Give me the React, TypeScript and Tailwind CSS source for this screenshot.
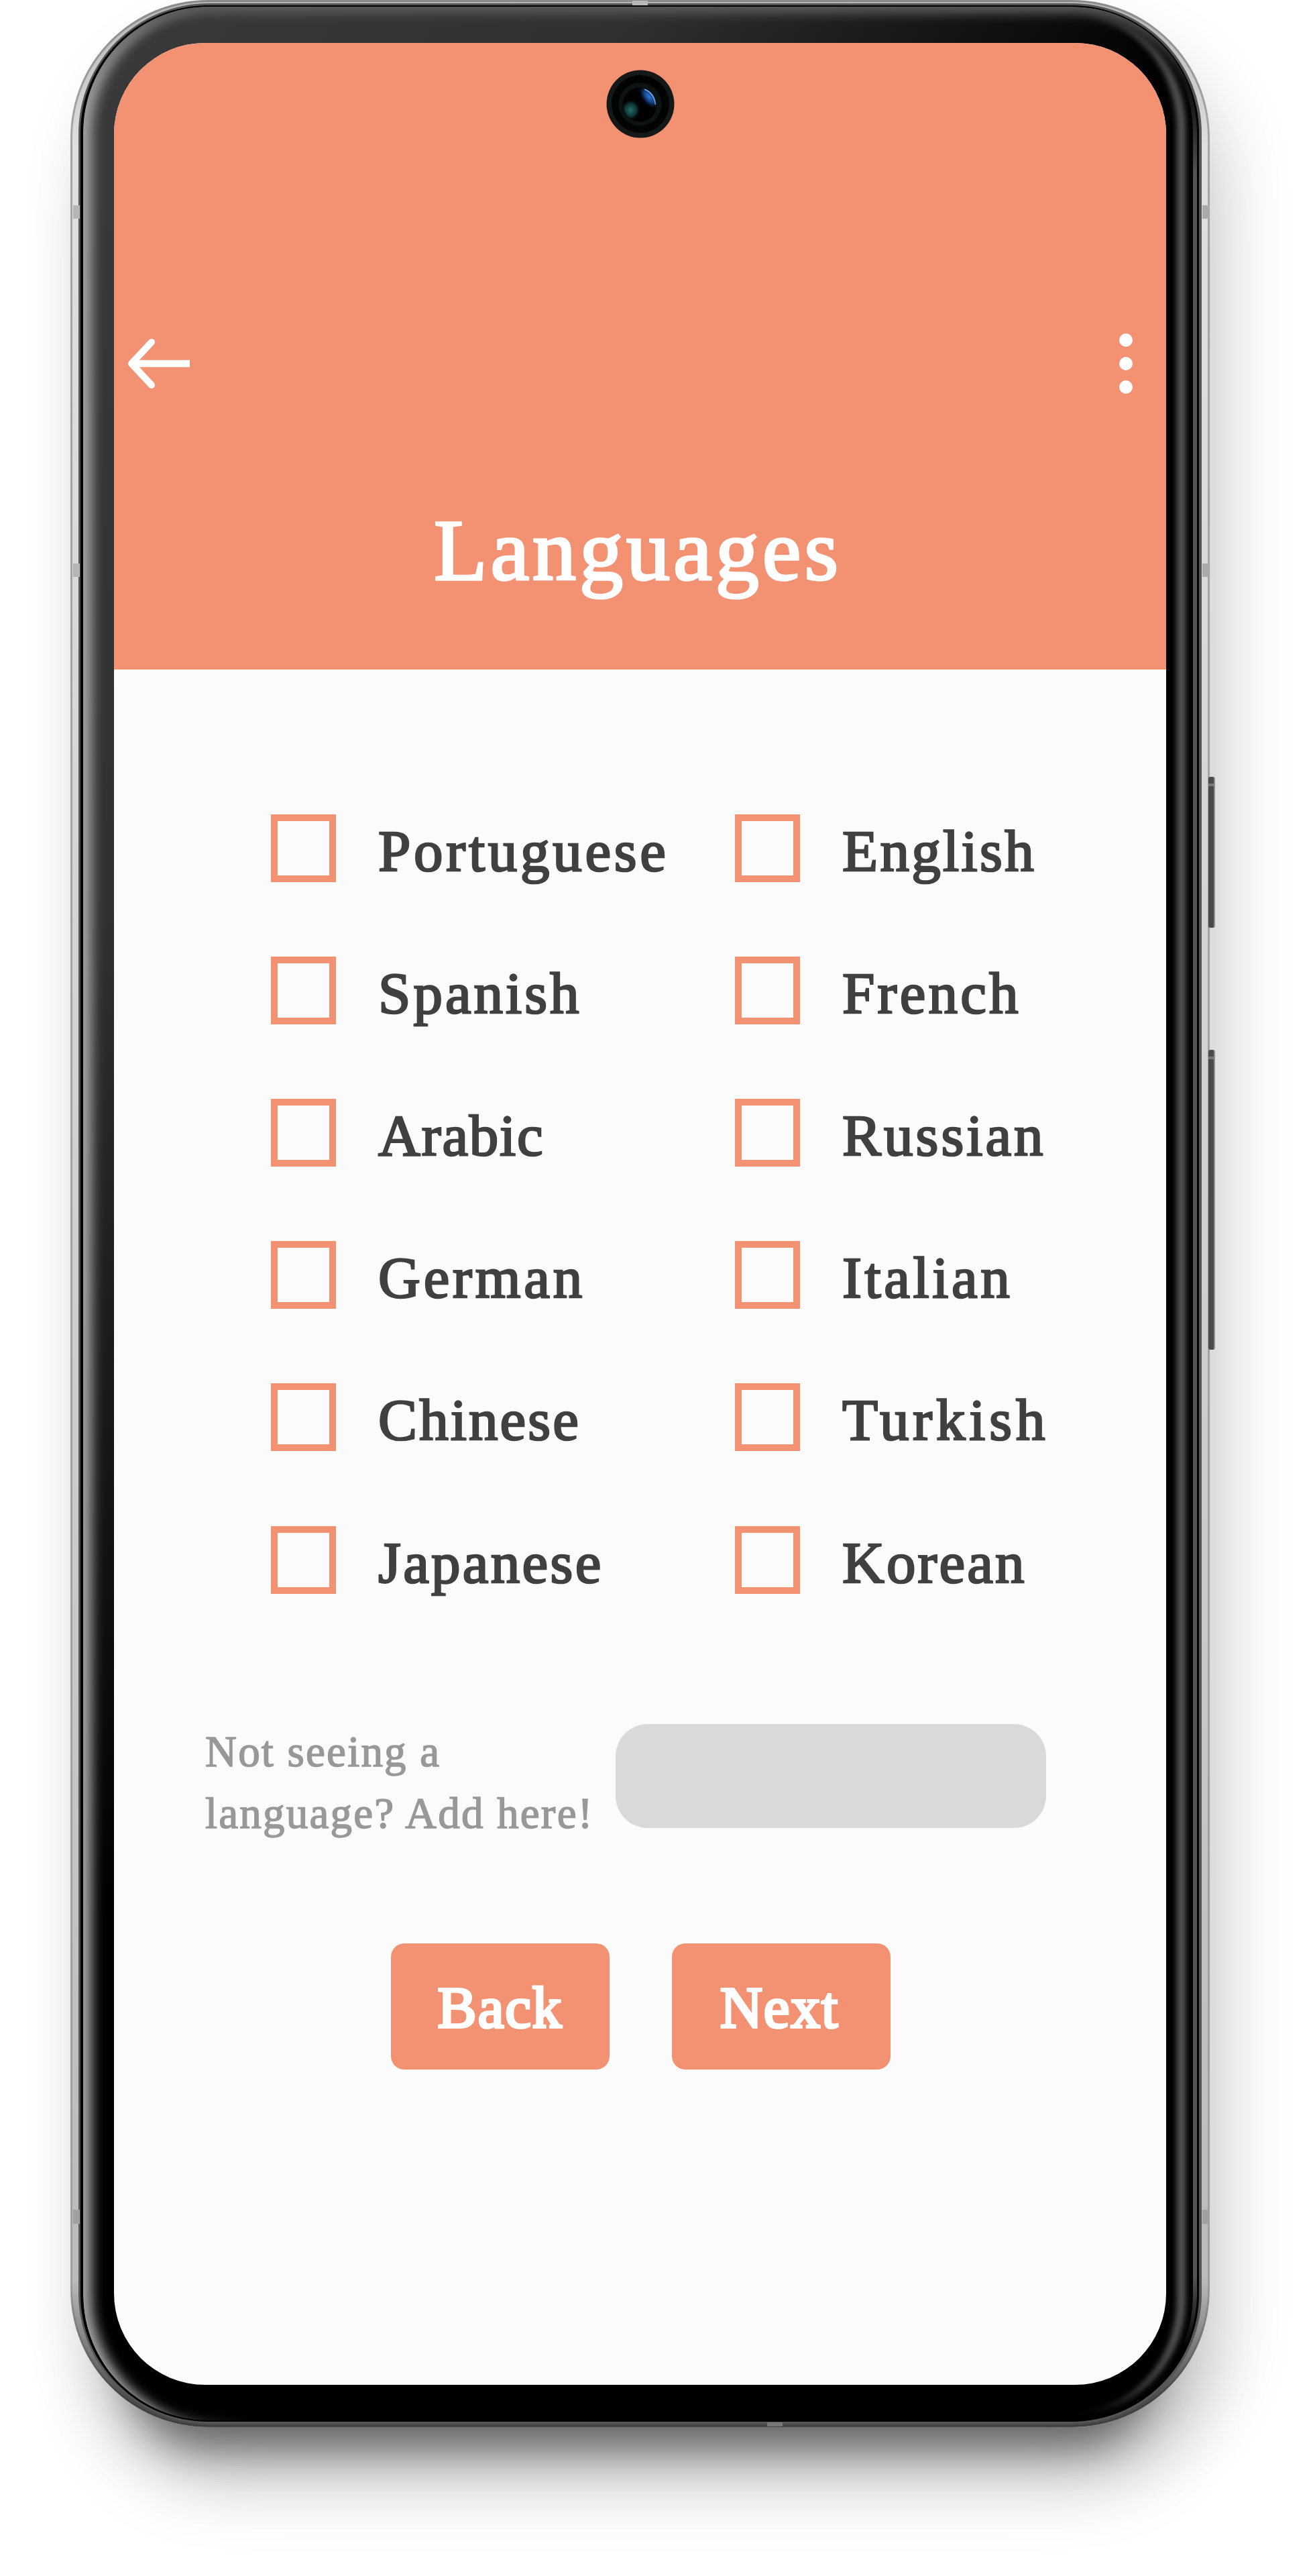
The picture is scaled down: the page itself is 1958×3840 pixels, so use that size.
import React from "react";

type Language = { name: string; tracking: string };

const languages: Language[] = [
  { name: "Portuguese", tracking: "tracking-[4.7px]" },
  { name: "English", tracking: "tracking-[3.3px]" },
  { name: "Spanish", tracking: "tracking-[4px]" },
  { name: "French", tracking: "tracking-[4.2px]" },
  { name: "Arabic", tracking: "tracking-[1.8px]" },
  { name: "Russian", tracking: "tracking-[4px]" },
  { name: "German", tracking: "tracking-[4.8px]" },
  { name: "Italian", tracking: "tracking-[4.6px]" },
  { name: "Chinese", tracking: "tracking-[3.1px]" },
  { name: "Turkish", tracking: "tracking-[5.8px]" },
  { name: "Japanese", tracking: "tracking-[3.3px]" },
  { name: "Korean", tracking: "tracking-[3.1px]" },
];

function Camera() {
  return (
    <svg viewBox="0 0 102 102" className="h-[102px] w-[102px]" aria-hidden="true">
      <defs>
        <radialGradient id="blueGlow" cx="0.5" cy="0.5" r="0.5">
          <stop offset="0" stopColor="#2f78d8" />
          <stop offset="0.5" stopColor="#16488f" stopOpacity="0.85" />
          <stop offset="1" stopColor="#020611" stopOpacity="0" />
        </radialGradient>
        <radialGradient id="tealGlow" cx="0.45" cy="0.5" r="0.5">
          <stop offset="0" stopColor="#23716f" />
          <stop offset="0.6" stopColor="#12403f" stopOpacity="0.8" />
          <stop offset="1" stopColor="#020606" stopOpacity="0" />
        </radialGradient>
        <clipPath id="lens">
          <circle cx="50" cy="52" r="25" />
        </clipPath>
      </defs>
      <circle cx="51" cy="51" r="50.5" fill="#141817" />
      <circle cx="51" cy="51" r="43" fill="#020303" />
      <circle cx="50.5" cy="51.5" r="32" fill="#0d1213" />
      <circle cx="50" cy="52" r="25.5" fill="#010102" />
      <g clipPath="url(#lens)">
        <ellipse cx="64" cy="40" rx="12" ry="22" fill="url(#blueGlow)" transform="rotate(-38 64 40)" />
        <ellipse cx="38" cy="60" rx="15" ry="16" fill="url(#tealGlow)" />
        <path d="M57 29 Q71 34 73.5 52" fill="none" stroke="#8cc4f5" strokeWidth="1.4" opacity="0.85" />
      </g>
    </svg>
  );
}

function SideButton({ className }: { className: string }) {
  return (
    <div
      className={`absolute left-[1697px] w-[10px] rounded-[3px] border-r-2 border-[#8d8d8d] bg-[#4a4a4a] ${className}`}
    >
      <div className="mt-[10px] h-[4px] bg-[#777777]" />
    </div>
  );
}

function Header() {
  return (
    <header className="flex h-[934px] flex-col bg-[#f39173] text-white">
      <div className="flex h-[102px] shrink-0 justify-center pt-[40px]">
        <Camera />
      </div>
      <div className="mt-[331px] flex h-[90px] shrink-0 items-center justify-between pl-[19px] pr-[50px]">
        <svg viewBox="0 0 96 80" className="h-[80px] w-[96px]" aria-label="Back">
          <path d="M37 8 L7 40 L37 72" fill="none" stroke="white" strokeWidth="10" strokeLinecap="round" strokeLinejoin="round" />
          <path d="M10 40 H94" stroke="white" strokeWidth="10.5" />
        </svg>
        <div className="flex flex-col gap-[15px]">
          <span className="h-[20px] w-[20px] rounded-full bg-white" />
          <span className="h-[20px] w-[20px] rounded-full bg-white" />
          <span className="h-[20px] w-[20px] rounded-full bg-white" />
        </div>
      </div>
      <h1 className="mt-[163px] pl-[477px] text-[130px] leading-[140px] tracking-[5px] [-webkit-text-stroke:3.5px_white]">
        Languages
      </h1>
    </header>
  );
}

function LanguageOption({ name, tracking }: Language) {
  return (
    <label className="flex h-[212.2px] items-center">
      <span className="h-[101px] w-[97px] shrink-0 border-[10px] border-[#f39173]" />
      <span
        className={`ml-[63px] pt-[9px] text-[87px] leading-[100px] text-[#404040] [-webkit-text-stroke:2.6px_#404040] ${tracking}`}
      >
        {name}
      </span>
    </label>
  );
}

function Screen() {
  return (
    <div className="relative h-[3491px] w-[1569px] overflow-hidden rounded-[136px] bg-[#fbfbfb]">
      <Header />
      <main>
        <div className="grid grid-cols-[692px_auto] pl-[234px] pt-[160px]">
          {languages.map((language) => (
            <LanguageOption key={language.name} {...language} />
          ))}
        </div>
        <div className="mt-[134px] flex items-start pl-[136px]">
          <p className="w-[612px] whitespace-nowrap text-[65px] leading-[92px] tracking-[2.2px] text-[#989898] [-webkit-text-stroke:1.5px_#989898]">
            Not seeing a
            <br />
            language? Add here!
          </p>
          <div className="mt-[5px] h-[155px] w-[642px] rounded-[48px] bg-[#d9d9d9]" />
        </div>
        <div className="mt-[148px] flex gap-[93px] pl-[413px] text-[87px] text-white">
          <button className="h-[188px] w-[326px] rounded-[20px] bg-[#f39173] pt-[4px] tracking-[2px] [-webkit-text-stroke:4px_white]">
            Back
          </button>
          <button className="h-[188px] w-[326px] rounded-[20px] bg-[#f39173] pr-[5px] pt-[4px] tracking-[2px] [-webkit-text-stroke:4px_white]">
            Next
          </button>
        </div>
      </main>
    </div>
  );
}

export default function App() {
  return (
    <div className="h-[3840px] w-[1958px] overflow-hidden bg-white pl-[105px] font-['Liberation_Serif',serif]">
      {/* Metal frame with the soft shadow below and beside it */}
      <div className="relative h-[3618px] w-[1699px] rounded-[205px] bg-[linear-gradient(to_bottom,#8a8a8a_0%,#a5a5a5_5%,#a0a0a0_94%,#404040_99%)] p-[3px] shadow-[10px_120px_120px_-50px_rgba(0,0,0,0.2),28px_60px_100px_0px_rgba(0,0,0,0.14),0px_115px_60px_-85px_rgba(0,0,0,0.45)]">
        <SideButton className="top-[1158px] h-[225px]" />
        <SideButton className="top-[1565px] h-[447px]" />
        <div className="h-full rounded-[202px] bg-[linear-gradient(to_bottom,#b5b5b5_0%,#e0e0e0_6%,#cccccc_60%,#bbbbbb_94%,#4a4a4a_99%)] px-[9px] py-[2px]">
          <div className="h-full rounded-[194px] bg-[#555555] py-[3px] pl-[3px] pr-[4px]">
            {/* Black glass body */}
            <div className="relative h-full rounded-[190px] border-2 border-l-4 border-black bg-[linear-gradient(120deg,#3a3a3a_0%,#303030_22%,#000000_45%)] pl-[46px] pt-[54px]">
              <div className="absolute inset-0 rounded-[187px] shadow-[inset_17px_2px_18px_-4px_#a4a4a4] [mask-image:linear-gradient(to_right,black_0%,black_6%,transparent_15%)]" />
              <div className="absolute inset-0 rounded-[187px] shadow-[inset_0_14px_16px_-3px_#5a5a5a] [mask-image:linear-gradient(to_bottom,black_0%,transparent_5%)]" />
              <div className="absolute inset-y-0 left-0 right-[1px] rounded-[187px] border-r-[6px] border-[#545454] [mask-image:linear-gradient(to_bottom,transparent_3%,black_7%,black_94%,transparent_97%)]" />
              <div className="absolute inset-y-[10px] left-[200px] right-[18px] rounded-[170px] border-r-[13px] border-[#565656] blur-[4px]" />
              <Screen />
            </div>
          </div>
        </div>
        {/* Antenna bands */}
        <div className="absolute left-[4px] top-[306px] h-[20px] w-[10px] bg-[#b5b5b5]" />
        <div className="absolute right-[1px] top-[306px] h-[20px] w-[10px] bg-[#ababab]" />
        <div className="absolute left-[4px] top-[840px] h-[20px] w-[10px] bg-[#b5b5b5]" />
        <div className="absolute right-[1px] top-[840px] h-[20px] w-[10px] bg-[#ababab]" />
        <div className="absolute left-[4px] top-[3294px] h-[21px] w-[10px] bg-[#a0a0a0]" />
        <div className="absolute right-[1px] top-[3294px] h-[21px] w-[10px] bg-[#a0a0a0]" />
        <div className="absolute left-[838px] top-[1px] h-[7px] w-[23px] bg-[#b8b8b8]" />
        <div className="absolute bottom-[1px] left-[1039px] h-[6px] w-[23px] bg-[#777777]" />
      </div>
    </div>
  );
}
